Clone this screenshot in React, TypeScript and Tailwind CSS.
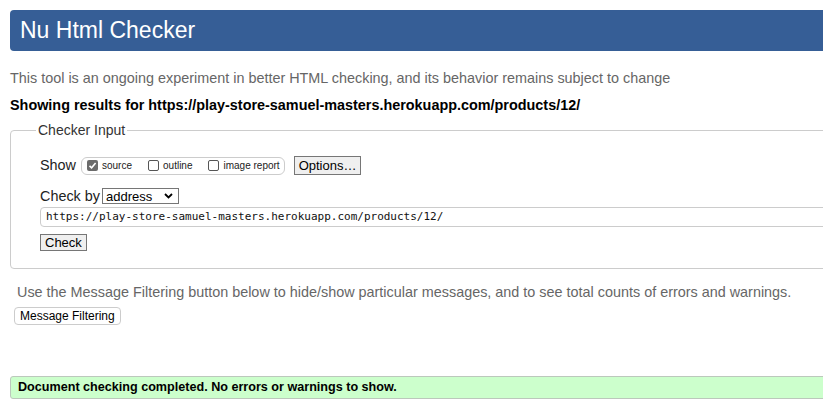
// Nu Html Checker result page
const sans = { fontFamily: '"Liberation Sans", Arial, sans-serif' };

function Box({ checked, label }: { checked?: boolean; label: string }) {
  return (
    <span className="flex items-center gap-[4px]">
      {checked ? (
        <span className="flex h-[11px] w-[11px] items-center justify-center rounded-[2px] bg-[#6b6b6b]">
          <svg width="9" height="9" viewBox="0 0 9 9">
            <path d="M1.5 4.8 L3.6 6.8 L7.6 2" stroke="#fff" strokeWidth="1.6" fill="none" />
          </svg>
        </span>
      ) : (
        <span className="h-[11px] w-[11px] rounded-[2px] border border-[#555] bg-white" />
      )}
      <span className="text-[10px] leading-none text-[#222]">{label}</span>
    </span>
  );
}

export default function App() {
  return (
    <div
      className="h-[416px] w-[823px] overflow-hidden bg-white text-[14px] text-[#222]"
      style={sans}
    >
      <div className="w-[900px] px-[10px] pt-[10px]">
        <h1 className="flex h-[41px] items-center rounded-[4px] bg-[#365e96] pl-[10px] text-[23px] font-normal text-white">
          Nu Html Checker
        </h1>

        <p className="mt-[18px] text-[14.4px] leading-[18px] text-[#666]">
          This tool is an ongoing experiment in better HTML checking, and its behavior remains
          subject to change
        </p>
        <p className="mt-[9px] text-[14.4px] font-bold leading-[18px] text-black">
          Showing results for https://play-store-samuel-masters.herokuapp.com/products/12/
        </p>

        <fieldset className="mt-[6px] rounded-[4px] border border-[#ccc] pb-[15px] pl-[29px] pr-0 pt-[14px]">
          <legend className="-ml-[4px] px-[2px] text-[14px] text-[#333]">Checker Input</legend>

          <div className="flex items-center">
            <span className="mr-[5px] text-[14.4px]">Show</span>
            <div className="flex h-[18px] items-center gap-[16px] rounded-[6px] border border-[#ccc] pl-[5px] pr-[4px]">
              <Box checked label="source" />
              <Box label="outline" />
              <Box label="image report" />
            </div>
            <button className="ml-[9px] h-[19px] border border-[#767676] bg-[#efefef] px-[4px] text-[13px] leading-none text-black">
              Options…
            </button>
          </div>

          <div className="mt-[9px] flex items-center">
            <span className="mr-[2px] text-[14.4px]">Check by</span>
            <div className="flex h-[16px] w-[77px] items-center justify-between border border-[#767676] bg-white pl-[3px] pr-[5px] text-[13px] leading-none text-black">
              <span>address</span>
              <svg width="9" height="6" viewBox="0 0 9 6">
                <path d="M1 1 L4.5 4.5 L8 1" stroke="#000" strokeWidth="1.8" fill="none" />
              </svg>
            </div>
          </div>

          <div
            className="flex h-[20px] w-[900px] items-center rounded-[4px] border border-[#ccc] pl-[5px] text-[11px] text-[#111]"
            style={{ fontFamily: '"DejaVu Sans Mono", "Liberation Mono", monospace' }}
          >
            https://play-store-samuel-masters.herokuapp.com/products/12/
          </div>

          <button className="mt-[7px] h-[17px] border border-[#767676] bg-[#efefef] px-[4px] text-[13px] leading-none text-black">
            Check
          </button>
        </fieldset>

        <p className="ml-[7px] mt-[14px] text-[14.4px] leading-[18px] text-[#666]">
          Use the Message Filtering button below to hide/show particular messages, and to see
          total counts of errors and warnings.
        </p>
        <button className="ml-[4px] mt-[6px] h-[18px] rounded-[4px] border border-[#ccc] bg-white px-[5px] text-[12px] leading-none text-black">
          Message Filtering
        </button>

        <div className="mt-[50px] flex h-[23px] items-center rounded-[3px] border border-[#bcc8bc] bg-[#ccffcc] pl-[7px] text-[12.6px] font-bold text-black">
          Document checking completed. No errors or warnings to show.
        </div>
      </div>
    </div>
  );
}
